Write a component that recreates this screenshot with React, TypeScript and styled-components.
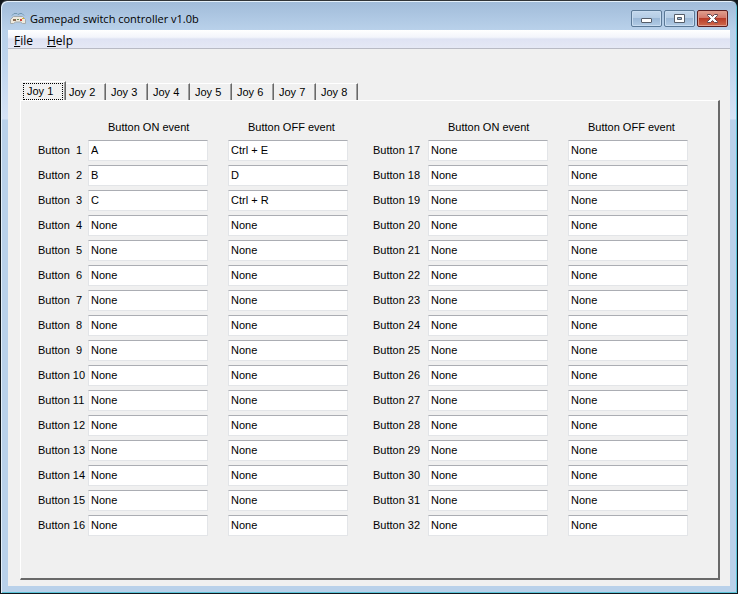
import React from "react";
import styled, { createGlobalStyle } from "styled-components";

const GlobalStyle = createGlobalStyle`
  *, *::before, *::after { box-sizing: border-box; }
  body {
    margin: 0;
    background: #10161c;
    color: #000;
    font: 11px/13px "Liberation Sans", Arial, sans-serif;
  }
`;

const Window = styled.main`
  display: flex;
  flex-direction: column;
  min-height: 100vh;
  padding: 0 7px 7px;
  border: 1px solid #10161c;
  border-top-color: #303438;
  border-radius: 7px 7px 0 0;
  background:
    linear-gradient(#a0bbd9, #b9d1ea 29px, #bfd5ed 60px, #d6e3f6 118px, #b9d1ea 119px);
  box-shadow: inset 1px 1px 0 #e4f0fa, inset -1px -1px 0 #5cc4d8;
`;

const TitleBar = styled.header`
  display: flex;
  align-items: center;
  gap: 4px;
  height: 29px;
  padding: 6px 2px 0;
`;

const Title = styled.h1`
  flex: 1;
  margin: 0;
  font: 11px/16px "Open Sans", "Segoe UI", sans-serif;
`;

const Controls = styled.div`
  display: flex;
  gap: 2px;
`;

const ControlButton = styled.button<{ $close?: boolean }>`
  display: grid;
  place-items: center;
  width: 31px;
  height: 17px;
  padding: 0;
  border: 1px solid ${(p) => (p.$close ? "#5a1d20" : "#5a7896")};
  border-radius: 2px;
  background: ${(p) =>
    p.$close
      ? "linear-gradient(#e0a090, #d3776a 46%, #b93c28 50%, #cf6a4c)"
      : "linear-gradient(#c3d7ec, #b4cce5 46%, #9bb8d7 50%, #b2cbe5)"};
  box-shadow: inset 0 0 0 1px ${(p) => (p.$close ? "#e09c8c" : "#c8dcf0")};
`;

const Client = styled.div`
  display: flex;
  flex: 1;
  flex-direction: column;
  background: #f0f0f0;
`;

const MenuBar = styled.nav`
  display: flex;
  gap: 2px;
  height: 19px;
  border-bottom: 1px solid #b8bac4;
  background: linear-gradient(#fff, #f3f5fb 40%, #dfe3f3 50%, #e5e8f5);
`;

const MenuButton = styled.button`
  padding: 2px 6px 0;
  border: 0;
  background: none;
  color: #000;
  font: 12px/18px "Open Sans", "Segoe UI", sans-serif;
`;

const TabArea = styled.section`
  display: flex;
  flex: 1;
  flex-direction: column;
  padding: 32px 10px 6px 12px;
`;

const TabList = styled.div`
  display: flex;
  align-items: flex-end;
  height: 19px;
  padding-left: 2px;
`;

const Tab = styled.button<{ $active: boolean }>`
  z-index: ${(p) => (p.$active ? 1 : 0)};
  width: ${(p) => (p.$active ? 44 : 42)}px;
  height: ${(p) => (p.$active ? 19 : 17)}px;
  margin-right: ${(p) => (p.$active ? -2 : 0)}px;
  padding: ${(p) => (p.$active ? "0 2px 0 1px" : "1px 0 0 5px")};
  border: 0;
  border-top: 1px solid #fff;
  border-right: 1px solid #696969;
  background: #f0f0f0;
  box-shadow: inset -1px 0 0 #a0a0a0;
  color: #000;
  font: inherit;
  text-align: left;
`;

const TabText = styled.span<{ $active: boolean }>`
  display: block;
  padding-left: ${(p) => (p.$active ? 3 : 0)}px;
  border: ${(p) => (p.$active ? "1px dotted #000" : "0")};
  line-height: 15px;
`;

const Panel = styled.div`
  display: flex;
  flex: 1;
  align-items: flex-start;
  gap: 25px;
  padding: 18px 30px 41px 17px;
  border: solid;
  border-width: 1px 2px 2px 1px;
  border-color: #fff #696969 #696969 #fff;
`;

const Group = styled.div<{ $label: number }>`
  display: grid;
  flex: 1 1 ${(p) => p.$label + 20}px;
  grid-template-columns: ${(p) => p.$label}px 1fr 20px 1fr;
  grid-template-rows: 17px;
  grid-auto-rows: 21px;
  row-gap: 4px;
  align-items: center;
`;

const Heading = styled.div<{ $column: number }>`
  grid-column: ${(p) => p.$column};
  padding-left: 20px;
  white-space: nowrap;
`;

const RowLabel = styled.label`
  white-space: pre;
`;

const EventInput = styled.input<{ $column: number }>`
  grid-column: ${(p) => p.$column};
  width: 100%;
  min-width: 0;
  height: 21px;
  padding: 0 2px 1px;
  border: 1px solid #e3e5e8;
  border-top-color: #abadb3;
  background: #fff;
  color: #000;
  font: inherit;
`;

const GamepadIcon = () => (
  <svg width="16" height="16" viewBox="0 0 16 16" aria-hidden="true">
    <path d="M2 4.500 4 2.500h3l1 1 2-1h2l2 2" fill="none" stroke="#7298b0" />
    <path d="M3.500 5.500h9l3 3v4h-3l-2-1.500h-5l-2 1.500h-3v-4z" fill="#eeeade" stroke="#a3abad" />
    <path d="M3 8h3v2H3z" fill="#8a6a50" />
    <path d="M7 8h2v1H7z" fill="#6c8a58" />
    <path d="M10 8h2v2h-2z" fill="#d04438" />
    <path d="M12 7h2v1h-2z" fill="#d8b030" />
  </svg>
);

const MinimizeIcon = () => (
  <svg width="13" height="11" viewBox="0 0 13 11" aria-hidden="true">
    <rect x="1.500" y="5.500" width="10" height="4" rx="0.500" fill="#fff" stroke="#555d69" />
  </svg>
);

const MaximizeIcon = () => (
  <svg width="13" height="11" viewBox="0 0 13 11" aria-hidden="true">
    <path d="M1.500 1.500h10v8h-10zM4.500 4.500v2h4v-2z" fill="#fff" fillRule="evenodd" stroke="#555d69" />
  </svg>
);

const CloseIcon = () => (
  <svg width="13" height="11" viewBox="0 0 13 11" aria-hidden="true">
    <path
      d="M1.500 1.500h3l2 2 2-2h3v1l-3 3 3 3v1h-3l-2-2-2 2h-3v-1l3-3-3-3z"
      fill="#fff"
      stroke="#5f4650"
    />
  </svg>
);

const assigned: Record<number, [string, string]> = {
  1: ["A", "Ctrl + E"],
  2: ["B", "D"],
  3: ["C", "Ctrl + R"],
};

const ButtonGroup = ({ first, label }: { first: number; label: number }) => (
  <Group $label={label}>
    <Heading $column={2} id={`on-${first}`}>Button ON event</Heading>
    <Heading $column={4} id={`off-${first}`}>Button OFF event</Heading>
    {Array.from({ length: 16 }, (_, i) => first + i).map((n) => {
      const [on, off] = assigned[n] ?? ["None", "None"];
      return (
        <React.Fragment key={n}>
          <RowLabel id={`label-${n}`} htmlFor={`button-${n}`}>
            {`Button ${String(n).padStart(2, " ")}`}
          </RowLabel>
          <EventInput
            $column={2}
            id={`button-${n}`}
            aria-labelledby={`label-${n} on-${first}`}
            defaultValue={on}
          />
          <EventInput $column={4} aria-labelledby={`label-${n} off-${first}`} defaultValue={off} />
        </React.Fragment>
      );
    })}
  </Group>
);

export default function App() {
  const [active, setActive] = React.useState(1);
  return (
    <>
      <GlobalStyle />
      <Window>
        <TitleBar>
          <GamepadIcon />
          <Title>Gamepad switch controller v1.0b</Title>
          <Controls>
            <ControlButton aria-label="Minimize"><MinimizeIcon /></ControlButton>
            <ControlButton aria-label="Maximize"><MaximizeIcon /></ControlButton>
            <ControlButton aria-label="Close" $close><CloseIcon /></ControlButton>
          </Controls>
        </TitleBar>
        <Client>
          <MenuBar>
            <MenuButton><u>F</u>ile</MenuButton>
            <MenuButton><u>H</u>elp</MenuButton>
          </MenuBar>
          <TabArea>
            <TabList role="tablist">
              {[1, 2, 3, 4, 5, 6, 7, 8].map((n) => (
                <Tab
                  key={n}
                  role="tab"
                  aria-selected={n === active}
                  $active={n === active}
                  onClick={() => setActive(n)}
                >
                  <TabText $active={n === active}>Joy {n}</TabText>
                </Tab>
              ))}
            </TabList>
            <Panel role="tabpanel">
              <ButtonGroup first={1} label={50} />
              <ButtonGroup first={17} label={55} />
            </Panel>
          </TabArea>
        </Client>
      </Window>
    </>
  );
}
